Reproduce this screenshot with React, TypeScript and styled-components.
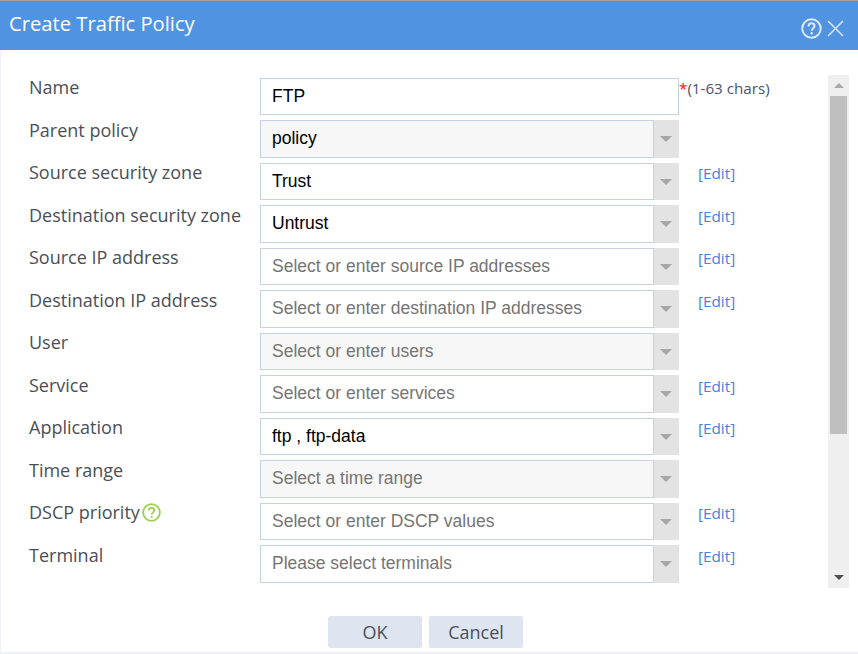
import React from "react";
import styled, { createGlobalStyle } from "styled-components";

const Global = createGlobalStyle`
  html, body { margin: 0; padding: 0; background: #fff; }
  body { width: 858px; height: 654px; overflow: hidden; }
`;

const Dialog = styled.div`
  width: 858px;
  height: 654px;
  box-sizing: border-box;
  display: flex;
  flex-direction: column;
  background: #fff;
  border-left: 1px solid #eef2f8;
  border-bottom: 2px solid #eef2f8;
`;

const Header = styled.header`
  height: 49px;
  flex: none;
  margin-left: -1px;
  border-top: 1px solid #a3a3a3;
  background: #5093e1;
  display: flex;
  align-items: center;
  justify-content: space-between;
  padding: 0 14px 0 9px;
`;

const Title = styled.h1`
  margin: 0 0 5px;
  font: 400 20.2px/1 "Open Sans", sans-serif;
  color: #fff;
`;

const HeaderIcons = styled.div`
  display: flex;
  align-items: center;
  gap: 5px;
  margin-top: 5px;
`;

const Body = styled.div`
  flex: 1;
  min-height: 0;
  display: flex;
  padding: 25px 9px 0 28px;
  align-items: flex-start;
  justify-content: space-between;
`;

const Form = styled.div`
  display: flex;
  flex-direction: column;
  padding-top: 2.75px;
  gap: 5px;
`;

const Row = styled.div`
  display: grid;
  grid-template-columns: 231px 419px auto;
  height: 37.5px;
`;

const Label = styled.label`
  display: flex;
  align-items: flex-start;
  gap: 2px;
  padding-top: 0.5px;
  font: 400 18px/18px "Open Sans", sans-serif;
  color: #4a4f57;
  white-space: nowrap;
`;

const Field = styled.div<{ $disabled?: boolean }>`
  display: flex;
  box-sizing: border-box;
  height: 100%;
  border: 1px solid #c3d3e6;
  background: ${(p) => (p.$disabled ? "#f7f7f7" : "#fff")};
`;

const Value = styled.span<{ $placeholder?: boolean }>`
  flex: 1;
  align-self: center;
  padding: 0 0 2px 11px;
  font: 400 17.5px/20px "Liberation Sans", Arial, sans-serif;
  color: ${(p) => (p.$placeholder ? "#757575" : "#000")};
  white-space: nowrap;
`;

const Arrow = styled.span`
  flex: none;
  box-sizing: border-box;
  width: 26px;
  margin: -1px -1px -1px 0;
  padding-right: 2px;
  background: #e3e3e3;
  border-left: 1px solid #c3d3e6;
  display: flex;
  align-items: center;
  justify-content: center;
`;

const Caret = styled.i`
  display: block;
  width: 0;
  height: 0;
  border-left: 6px solid transparent;
  border-right: 6px solid transparent;
  border-top: 6px solid #a6a6a6;
`;

const Hint = styled.span`
  font: 400 15.2px/20px "Open Sans", sans-serif;
  color: #4a5568;
  white-space: nowrap;
`;

const Star = styled.span`
  color: #ff0000;
`;

const EditLink = styled.a`
  margin: 0.5px 0 0 19px;
  font: 400 15.3px/20px "Open Sans", sans-serif;
  color: #4583e0;
  text-decoration: none;
`;

const Scrollbar = styled.div`
  width: 21px;
  height: 513px;
  background: #efefef;
  display: flex;
  flex-direction: column;
  align-items: center;
`;

const ScrollButton = styled.div`
  flex: none;
  height: 21px;
  display: flex;
  align-items: center;
  justify-content: center;
`;

const ScrollUp = styled.i`
  width: 0;
  height: 0;
  border-left: 5px solid transparent;
  border-right: 5px solid transparent;
  border-bottom: 5px solid #a9a9a9;
`;

const ScrollDown = styled.i`
  width: 0;
  height: 0;
  border-left: 5px solid transparent;
  border-right: 5px solid transparent;
  border-top: 5px solid #505050;
`;

const Thumb = styled.div`
  flex: none;
  width: 17px;
  height: 338px;
  background: #bfbfbf;
`;

const Track = styled.div`
  flex: 1;
`;

const Footer = styled.footer`
  flex: none;
  height: 64px;
  display: flex;
  justify-content: center;
  gap: 7px;
  padding: 28px 8px 4px 0;
  box-sizing: border-box;
`;

const Button = styled.button`
  width: 94px;
  height: 32px;
  border: 0;
  border-radius: 2px;
  background: #dfe5f0;
  color: #4a4f57;
  font: 400 18px/1 "Open Sans", sans-serif;
  padding: 0;
`;

const HelpIcon = ({ color, size }: { color: string; size: number }) => (
  <svg width={size} height={size} viewBox="0 0 20 20" fill="none">
    <circle cx="10" cy="10" r="8.8" stroke={color} strokeWidth="1.9" />
    <path d="M7.2 8c0-1.8 1.2-2.9 2.9-2.9S12.9 6.2 12.9 7.7c0 2-2.7 2.3-2.7 4.4" stroke={color} strokeWidth="1.9" />
    <circle cx="10.2" cy="14.6" r="1.2" fill={color} />
  </svg>
);

const CloseIcon = () => (
  <svg width="17" height="17" viewBox="0 0 17 17" fill="none">
    <path d="M1 1l15 15M16 1L1 16" stroke="#dbe9f9" strokeWidth="1.5" />
  </svg>
);

type Item = {
  label: string;
  value: string;
  placeholder?: boolean;
  disabled?: boolean;
  edit?: boolean;
  help?: boolean;
};

const items: Item[] = [
  { label: "Parent policy", value: "policy", disabled: true },
  { label: "Source security zone", value: "Trust", edit: true },
  { label: "Destination security zone", value: "Untrust", edit: true },
  { label: "Source IP address", value: "Select or enter source IP addresses", placeholder: true, edit: true },
  { label: "Destination IP address", value: "Select or enter destination IP addresses", placeholder: true, edit: true },
  { label: "User", value: "Select or enter users", placeholder: true, disabled: true },
  { label: "Service", value: "Select or enter services", placeholder: true, edit: true },
  { label: "Application", value: "ftp , ftp-data", edit: true },
  { label: "Time range", value: "Select a time range", placeholder: true, disabled: true },
  { label: "DSCP priority", value: "Select or enter DSCP values", placeholder: true, edit: true, help: true },
  { label: "Terminal", value: "Please select terminals", placeholder: true, edit: true },
];

export default function App() {
  return (
    <Dialog>
      <Global />
      <Header>
        <Title>Create Traffic Policy</Title>
        <HeaderIcons>
          <HelpIcon color="#dbe9f9" size={21} />
          <CloseIcon />
        </HeaderIcons>
      </Header>
      <Body>
        <Form>
          <Row>
            <Label>Name</Label>
            <Field>
              <Value>FTP</Value>
            </Field>
            <Hint>
              <Star>*</Star>(1-63 chars)
            </Hint>
          </Row>
          {items.map((it) => (
            <Row key={it.label}>
              <Label>
                {it.label}
                {it.help && <HelpIcon color="#9ccf4a" size={19} />}
              </Label>
              <Field $disabled={it.disabled}>
                <Value $placeholder={it.placeholder}>{it.value}</Value>
                <Arrow>
                  <Caret />
                </Arrow>
              </Field>
              {it.edit && <EditLink href="#">[Edit]</EditLink>}
            </Row>
          ))}
        </Form>
        <Scrollbar>
          <ScrollButton>
            <ScrollUp />
          </ScrollButton>
          <Thumb />
          <Track />
          <ScrollButton>
            <ScrollDown />
          </ScrollButton>
        </Scrollbar>
      </Body>
      <Footer>
        <Button>OK</Button>
        <Button>Cancel</Button>
      </Footer>
    </Dialog>
  );
}
